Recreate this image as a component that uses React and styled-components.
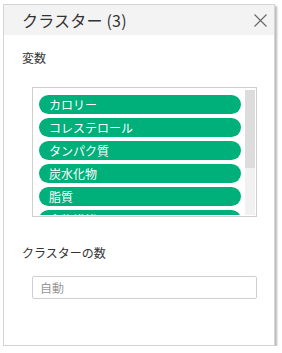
import React from 'react';
import styled, { createGlobalStyle } from 'styled-components';

const GlobalStyle = createGlobalStyle`
  body {
    margin: 0;
    background: #fff;
    font-family: "Noto Sans CJK JP", "Noto Sans", sans-serif;
  }
`;

const Page = styled.div`
  padding: 4px 0 0 3px;
`;

const Panel = styled.div`
  width: 272px;
  height: 342px;
  box-sizing: border-box;
  background: #fff;
  border: 1px solid #d4d4d4;
  box-shadow: 2px 2px 2px rgba(0, 0, 0, 0.28);
  display: flex;
  flex-direction: column;
`;

const Header = styled.div`
  height: 30px;
  background: #f3f3f3;
  display: flex;
  align-items: center;
  justify-content: space-between;
  padding: 0 6px 0 18px;
`;

const Title = styled.div`
  font-size: 16px;
  color: #333;
  letter-spacing: 0.2px;
`;

const CloseButton = styled.button`
  border: none;
  background: none;
  padding: 0;
  width: 16px;
  height: 16px;
  display: flex;
  align-items: center;
  justify-content: center;
  cursor: pointer;
`;

const Body = styled.div`
  padding: 14px 18px 0 18px;
  display: flex;
  flex-direction: column;
`;

const Label = styled.div`
  font-size: 12px;
  color: #333;
  margin-top: ${(p) => p.$top || 0}px;
`;

const ListBox = styled.div`
  margin: 21px 0 0 10px;
  width: 225px;
  box-sizing: border-box;
  border: 1px solid #cfcfcf;
  padding: 2px 1px 1px 1px;
  display: flex;
`;

const List = styled.div`
  flex: 1;
  height: 125px;
  overflow: hidden;
  padding: 5px 4px 0 5px;
  box-sizing: border-box;
  display: flex;
  flex-direction: column;
  gap: 4px;
`;

const Track = styled.div`
  width: 10px;
  height: 125px;
  background: #f1f1f1;
  display: flex;
  flex-direction: column;
`;

const Thumb = styled.div`
  height: 78px;
  background: #dcdcdc;
`;

const Pill = styled.div`
  flex: 0 0 19px;
  border-radius: 10px;
  background: #00b07b;
  color: #fff;
  font-size: 12px;
  line-height: 19px;
  padding-left: 10px;
`;

const Input = styled.input`
  margin: 15px 0 0 10px;
  width: 225px;
  height: 23px;
  box-sizing: border-box;
  border: 1px solid #cfcfcf;
  border-radius: 2px;
  padding: 0 7px;
  font-family: inherit;
  font-size: 12px;
  color: #333;
  outline: none;

  &::placeholder {
    color: #999;
  }
`;

const variables = ['カロリー', 'コレステロール', 'タンパク質', '炭水化物', '脂質', '食物繊維'];

export default function App() {
  return (
    <Page>
      <GlobalStyle />
      <Panel>
        <Header>
          <Title>クラスター (3)</Title>
          <CloseButton aria-label="close">
            <svg width="13" height="13" viewBox="0 0 13 13">
              <path d="M0.5 0.5 L12.5 12.5 M12.5 0.5 L0.5 12.5" stroke="#666" strokeWidth="1.1" />
            </svg>
          </CloseButton>
        </Header>
        <Body>
          <Label>変数</Label>
          <ListBox>
            <List>
              {variables.map((v) => (
                <Pill key={v}>{v}</Pill>
              ))}
            </List>
            <Track>
              <Thumb />
            </Track>
          </ListBox>
          <Label $top={27}>クラスターの数</Label>
          <Input placeholder="自動" />
        </Body>
      </Panel>
    </Page>
  );
}
